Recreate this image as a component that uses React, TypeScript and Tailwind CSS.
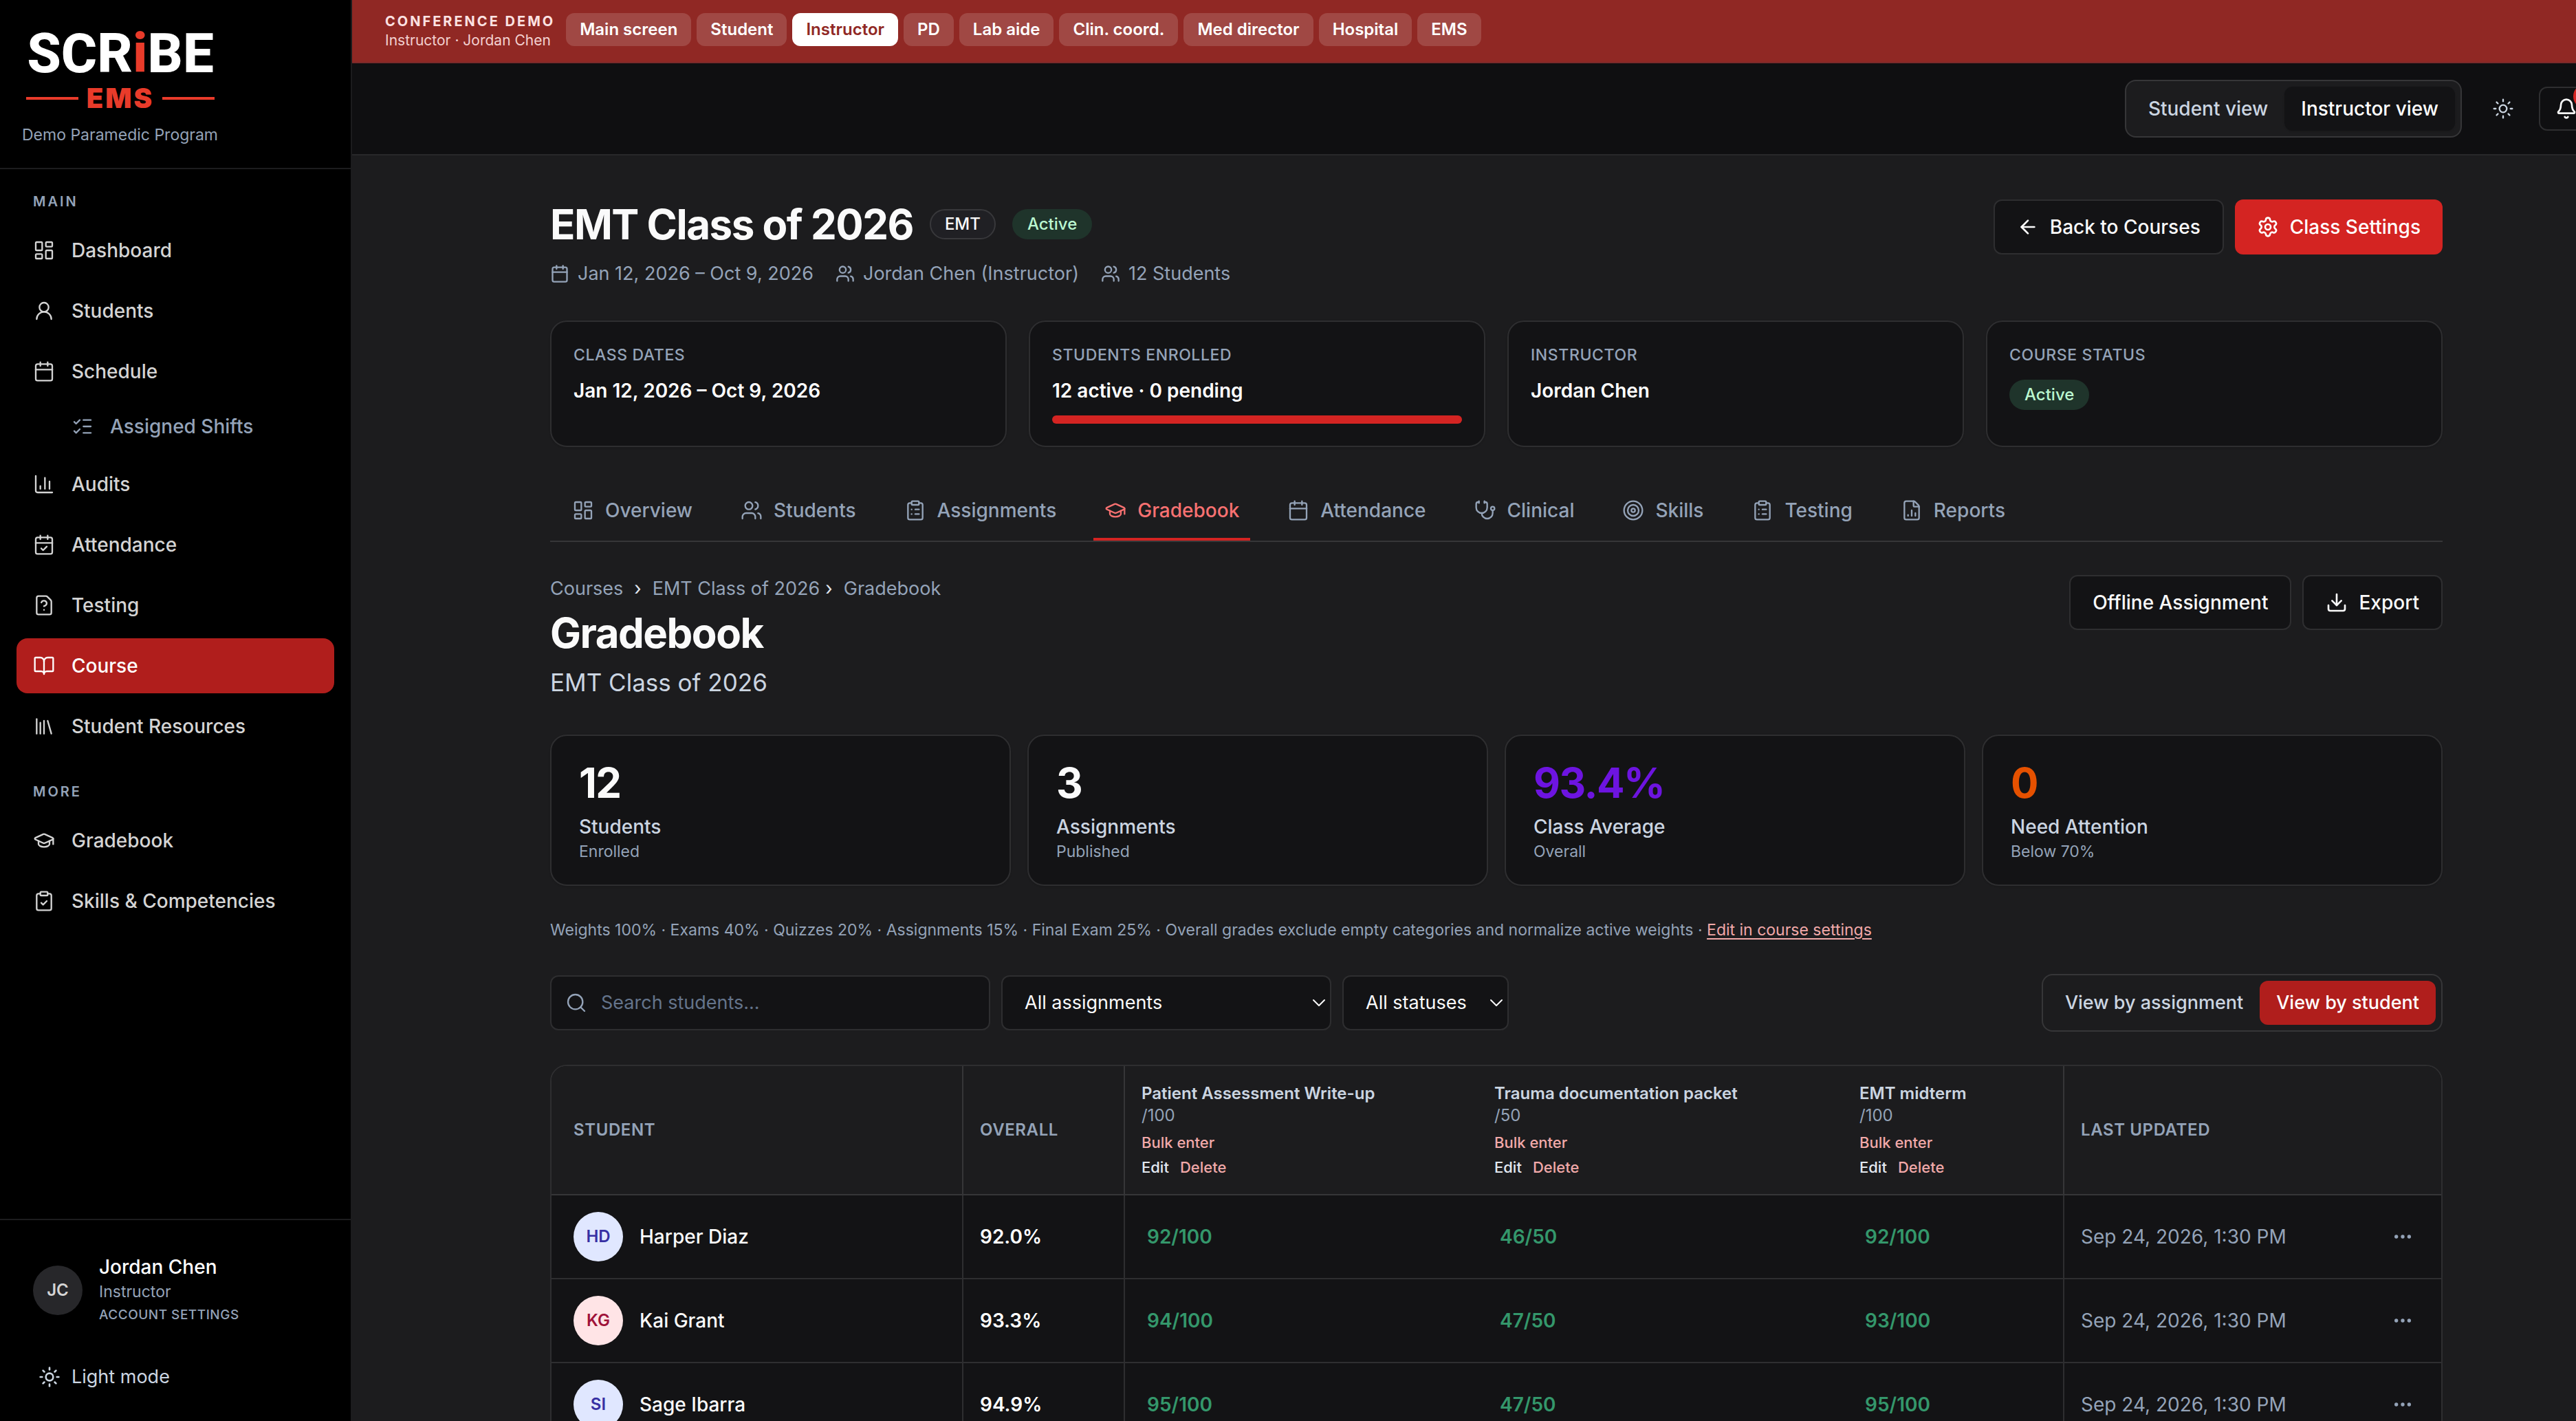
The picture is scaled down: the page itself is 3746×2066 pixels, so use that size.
import React, { useState } from 'react';
import {
  ArrowLeft,
  Bell,
  BookOpen,
  Calendar,
  CalendarCheck,
  ChartColumn,
  ChevronDown,
  ClipboardCheck,
  ClipboardList,
  Download,
  Ellipsis,
  FileChartColumn,
  FileQuestionMark,
  GraduationCap,
  LayoutDashboard,
  Library,
  ListChecks,
  Search,
  Settings,
  Stethoscope,
  Sun,
  Target,
  UserRound,
  Users,
  type LucideIcon,
} from 'lucide-react';
import clsx from 'clsx';

type NavItem = { label: string; icon: LucideIcon; children?: NavItem[] };

const mainNav: NavItem[] = [
  { label: 'Dashboard', icon: LayoutDashboard },
  { label: 'Students', icon: UserRound },
  { label: 'Schedule', icon: Calendar, children: [{ label: 'Assigned Shifts', icon: ListChecks }] },
  { label: 'Audits', icon: ChartColumn },
  { label: 'Attendance', icon: CalendarCheck },
  { label: 'Testing', icon: FileQuestionMark },
  { label: 'Course', icon: BookOpen },
  { label: 'Student Resources', icon: Library },
];

const moreNav: NavItem[] = [
  { label: 'Gradebook', icon: GraduationCap },
  { label: 'Skills & Competencies', icon: ClipboardCheck },
];

const demoRoles = ['Main screen', 'Student', 'Instructor', 'PD', 'Lab aide', 'Clin. coord.', 'Med director', 'Hospital', 'EMS'];

const tabs: NavItem[] = [
  { label: 'Overview', icon: LayoutDashboard },
  { label: 'Students', icon: Users },
  { label: 'Assignments', icon: ClipboardList },
  { label: 'Gradebook', icon: GraduationCap },
  { label: 'Attendance', icon: Calendar },
  { label: 'Clinical', icon: Stethoscope },
  { label: 'Skills', icon: Target },
  { label: 'Testing', icon: ClipboardList },
  { label: 'Reports', icon: FileChartColumn },
];

const stats = [
  { value: '12', label: 'Students', note: 'Enrolled', color: 'text-[#fafafa]' },
  { value: '3', label: 'Assignments', note: 'Published', color: 'text-[#fafafa]' },
  { value: '93.4%', label: 'Class Average', note: 'Overall', color: 'text-[#6d14e0]' },
  { value: '0', label: 'Need Attention', note: 'Below 70%', color: 'text-[#e65100]' },
];

const assignments = [
  { title: 'Patient Assessment Write-up', points: 100 },
  { title: 'Trauma documentation packet', points: 50 },
  { title: 'EMT midterm', points: 100 },
];

const indigo = 'bg-[#e0e7ff] text-[#3730a3]';
const rose = 'bg-[#ffe4e6] text-[#9f1239]';

const students = [
  { name: 'Harper Diaz', initials: 'HD', tone: indigo, overall: '92.0%', scores: [92, 46, 92] },
  { name: 'Kai Grant', initials: 'KG', tone: rose, overall: '93.3%', scores: [94, 47, 93] },
  { name: 'Sage Ibarra', initials: 'SI', tone: indigo, overall: '94.9%', scores: [95, 47, 95] },
];

const outlineButton =
  'flex h-20 items-center gap-4 rounded-xl border-2 border-[#2e2e30] bg-[#131315] px-8 text-[28px] font-medium text-[#fafafa]';

const Logo = () => (
  <div className="w-[274px]">
    <div className="text-center font-[Roboto,sans-serif] text-[80px] leading-[84px] font-extrabold text-white">
      SCR<span className="text-[#e93b2a]">i</span>BE
    </div>
    <div className="flex items-center gap-3 text-[#e93b2a]">
      <span className="h-1 flex-1 bg-[#e93b2a]" />
      <span className="text-[40px] leading-[46px] font-black tracking-[3px]">EMS</span>
      <span className="h-1 flex-1 bg-[#e93b2a]" />
    </div>
  </div>
);

const NavLink = ({ item, active }: { item: NavItem; active?: boolean }) => (
  <a
    href="#"
    className={clsx(
      'flex h-20 items-center gap-6 rounded-2xl px-6 text-[28px] font-medium',
      active ? 'bg-[#b01e1c] text-white' : 'text-[#d4d4d4]'
    )}
  >
    <item.icon className="size-8" strokeWidth={1.75} />
    {item.label}
  </a>
);

const NavSection = ({ title, items }: { title: string; items: NavItem[] }) => (
  <section>
    <h2 className="mb-4 px-6 text-xl leading-[30px] font-semibold tracking-[3px] text-[#94a3b8]">{title}</h2>
    <ul className="flex flex-col gap-2">
      {items.map((item) => (
        <li key={item.label}>
          <NavLink item={item} active={item.label === 'Course'} />
          {item.children?.map((child) => (
            <a
              key={child.label}
              href="#"
              className="mt-1 ml-14 flex h-18 items-center gap-6 px-6 text-[28px] font-medium text-[#94a3b8]"
            >
              <child.icon className="size-8" strokeWidth={1.75} />
              {child.label}
            </a>
          ))}
        </li>
      ))}
    </ul>
  </section>
);

const Sidebar = () => (
  <aside className="flex w-[512px] shrink-0 flex-col border-r-2 border-[#1c1c1e] bg-black">
    <div className="h-[246px] border-b-2 border-[#1c1c1e] px-8 pt-9">
      <div className="pl-1.5">
        <Logo />
      </div>
      <p className="mt-3.5 text-[23px] leading-8 text-[#94a3b8]">Demo Paramedic Program</p>
    </div>
    <nav className="flex flex-1 flex-col gap-10 px-6 pt-8">
      <NavSection title="MAIN" items={mainNav} />
      <NavSection title="MORE" items={moreNav} />
    </nav>
    <div className="h-[294px] border-t-2 border-[#1c1c1e] px-12 pt-12">
      <a href="#" className="flex items-center gap-6">
        <span className="flex size-18 items-center justify-center rounded-full bg-[#27272a] text-2xl font-semibold text-[#d4d4d4]">
          JC
        </span>
        <span className="flex flex-col">
          <span className="text-[28px] leading-10 font-medium text-white">Jordan Chen</span>
          <span className="text-[23px] leading-8 text-[#94a3b8]">Instructor</span>
          <span className="text-[19px] leading-9 font-medium tracking-[0.5px] text-[#94a3b8]">ACCOUNT SETTINGS</span>
        </span>
      </a>
      <button className="mt-13 flex items-center gap-4 px-2 text-[27px] leading-10 text-[#cbd5e1]">
        <Sun className="size-8" />
        Light mode
      </button>
    </div>
  </aside>
);

const DemoBar = () => (
  <div className="flex h-23 items-center gap-4 border-b-2 border-[#7c2a2a] bg-[#902824] px-12 whitespace-nowrap">
    <div>
      <p className="text-xl leading-7 font-bold tracking-[3px] text-[#fde2e2]">CONFERENCE DEMO</p>
      <p className="text-[21px] leading-7 text-[#f3d1d0]">Instructor · Jordan Chen</p>
    </div>
    <div className="flex gap-2 pb-1">
      {demoRoles.map((role) => (
        <button
          key={role}
          className={clsx(
            'h-12 rounded-xl px-5 text-2xl font-semibold',
            role === 'Instructor' ? 'bg-white text-[#902824]' : 'bg-[#a04844] text-white'
          )}
        >
          {role}
        </button>
      ))}
    </div>
  </div>
);

const TopBar = () => (
  <header className="flex h-[134px] items-center justify-end gap-4 border-b-2 border-[#28282a] bg-[#0f0f11] pr-[68px]">
    <div className="mr-2 flex h-21 items-center rounded-2xl border-2 border-[#363638] bg-[#1c1c1e] px-2 text-[28px] font-medium">
      <button className="h-16 px-6 text-[#cbd5e1]">Student view</button>
      <button className="h-16 rounded-xl bg-[#131315] px-6 text-white shadow-sm">Instructor view</button>
    </div>
    <button aria-label="Toggle theme" className="flex size-18 items-center justify-center text-[#cbd5e1]">
      <Sun className="size-8" strokeWidth={1.75} />
    </button>
    <button
      aria-label="Notifications"
      className="relative flex h-16 w-20 items-center justify-center rounded-xl border-2 border-[#2e2e30] text-[#fafafa]"
    >
      <Bell className="size-8" />
      <span className="absolute -top-1.5 -right-2 size-9 rounded-full bg-[#d42422]" />
    </button>
  </header>
);

const ActiveBadge = () => (
  <span className="inline-flex h-11 items-center rounded-full bg-[#1f342b] px-5.5 text-2xl font-medium text-[#bbf7d0]">
    Active
  </span>
);

const ClassHeader = () => (
  <div className="flex items-start justify-between">
    <div>
      <div className="flex h-18 items-center gap-6">
        <h1 className="text-6xl font-bold tracking-tight text-[#fafafa]">EMT Class of 2026</h1>
        <span className="inline-flex h-11 items-center rounded-full border-2 border-[#38383b] bg-[#202024] px-5 text-2xl font-medium text-[#fafafa]">
          EMT
        </span>
        <ActiveBadge />
      </div>
      <div className="mt-4 flex gap-8 text-[27px] leading-10 text-[#94a3b8]">
        <span className="flex items-center gap-3">
          <Calendar className="size-7" />
          Jan 12, 2026 – Oct 9, 2026
        </span>
        <span className="flex items-center gap-3">
          <Users className="size-7" />
          Jordan Chen (Instructor)
        </span>
        <span className="flex items-center gap-3">
          <Users className="size-7" />
          12 Students
        </span>
      </div>
    </div>
    <div className="flex gap-4">
      <button className={outlineButton}>
        <ArrowLeft className="size-8" />
        Back to Courses
      </button>
      <button className="flex h-20 items-center gap-4 rounded-xl bg-[#d42422] px-8 text-[28px] font-medium text-white">
        <Settings className="size-8" />
        Class Settings
      </button>
    </div>
  </div>
);

const InfoCard = ({ label, children }: { label: string; children: React.ReactNode }) => (
  <div className="h-46 rounded-3xl border-2 border-[#2e2e30] bg-[#131315] p-8 shadow-sm">
    <p className="text-[23px] leading-8 font-medium tracking-[0.6px] text-[#94a3b8] uppercase">{label}</p>
    {children}
  </div>
);

const InfoCards = () => (
  <div className="mt-12 grid grid-cols-4 gap-8 text-[28px] leading-10 font-semibold text-white">
    <InfoCard label="Class dates">
      <p className="mt-4">Jan 12, 2026 – Oct 9, 2026</p>
    </InfoCard>
    <InfoCard label="Students enrolled">
      <p className="mt-4">12 active · 0 pending</p>
      <div className="mt-4 h-3 rounded-full bg-[#d42422]" />
    </InfoCard>
    <InfoCard label="Instructor">
      <p className="mt-4">Jordan Chen</p>
    </InfoCard>
    <InfoCard label="Course status">
      <div className="mt-5 flex">
        <ActiveBadge />
      </div>
    </InfoCard>
  </div>
);

const CourseTabs = () => (
  <nav className="mt-12 flex gap-[38px] border-b-2 border-[#363638] px-4">
    {tabs.map((tab) => (
      <a
        key={tab.label}
        href="#"
        className={clsx(
          'flex h-22 items-center gap-4 px-4 text-[28px] font-medium',
          tab.label === 'Gradebook'
            ? 'border-b-4 border-[#d42422] pt-1 text-[#f87171]'
            : 'text-[#94a3b8]'
        )}
      >
        <tab.icon className="size-8" strokeWidth={1.75} />
        {tab.label}
      </a>
    ))}
  </nav>
);

const GradebookHeader = () => (
  <div className="mt-12 flex items-start justify-between">
    <div>
      <nav aria-label="Breadcrumb" className="flex gap-4 text-[27px] leading-10 text-[#94a3b8]">
        <a href="#">Courses</a>
        <span className="text-[#e2e8f0]">›</span>
        <span className="flex gap-2">
          <a href="#">EMT Class of 2026</a>
          <span className="text-[#e2e8f0]">›</span>
        </span>
        <span>Gradebook</span>
      </nav>
      <h2 className="mt-2 text-6xl leading-[72px] font-bold tracking-tight text-[#fafafa]">Gradebook</h2>
      <p className="mt-2 text-[35px] leading-14 text-[#cbd5e1]">EMT Class of 2026</p>
    </div>
    <div className="flex gap-4">
      <button className={outlineButton}>Offline Assignment</button>
      <button className={outlineButton}>
        <Download className="size-8" />
        Export
      </button>
    </div>
  </div>
);

const StatCards = () => (
  <div className="mt-12 grid grid-cols-4 gap-6">
    {stats.map((stat) => (
      <div key={stat.label} className="rounded-3xl border-2 border-[#2e2e30] bg-[#131315] px-10 py-8 shadow-sm">
        <p className={clsx('text-6xl leading-[72px] font-bold tracking-tight', stat.color)}>{stat.value}</p>
        <p className="mt-2 text-[28px] leading-10 font-medium text-[#cbd5e1]">{stat.label}</p>
        <p className="text-[23px] leading-8 text-[#94a3b8]">{stat.note}</p>
      </div>
    ))}
  </div>
);

const FilterSelect = ({ label, options, className }: { label: string; options: string[]; className: string }) => (
  <div className={clsx('relative', className)}>
    <select
      aria-label={label}
      className="h-20 w-full appearance-none rounded-xl border-2 border-[#2e2e30] bg-[#131315] pr-10 pl-8 text-[27px] text-[#fafafa]"
    >
      {options.map((option) => (
        <option key={option}>{option}</option>
      ))}
    </select>
    <ChevronDown className="pointer-events-none absolute top-6 right-0.5 size-8 text-[#fafafa]" strokeWidth={1.5} />
  </div>
);

const Filters = () => {
  const [view, setView] = useState('student');

  const viewButton = (name: string) =>
    clsx('h-16 px-6', view === name ? 'rounded-xl bg-[#b01e1c] text-white' : 'text-[#cbd5e1]');

  return (
    <div className="mt-12 flex items-center gap-4">
      <label className="flex h-20 w-160 items-center gap-5 rounded-xl border-2 border-[#2e2e30] bg-[#131315] px-5">
        <Search className="size-8 shrink-0 text-[#94a3b8]" strokeWidth={1.75} />
        <input
          type="text"
          aria-label="Search students"
          placeholder="Search students..."
          className="w-full bg-transparent text-[27px] text-white outline-none placeholder:text-[#64748b]"
        />
      </label>
      <FilterSelect
        label="Assignment"
        options={['All assignments', ...assignments.map((a) => a.title)]}
        className="w-120"
      />
      <FilterSelect label="Status" options={['All statuses']} className="w-[242px]" />
      <div className="ml-auto flex h-21 items-center rounded-2xl border-2 border-[#363638] px-2 text-[27px] font-medium">
        <button className={viewButton('assignment')} onClick={() => setView('assignment')}>
          View by assignment
        </button>
        <button className={viewButton('student')} onClick={() => setView('student')}>
          View by student
        </button>
      </div>
    </div>
  );
};

const GradeTable = () => (
  <div className="mt-12 overflow-hidden rounded-3xl border-2 border-[#2e2e30] bg-[#131315]">
    <table className="w-full table-fixed border-separate border-spacing-0 text-left text-[28px]">
      <colgroup>
        <col className="w-[599px]" />
        <col className="w-[235px]" />
        <col className="w-[513px]" />
        <col className="w-[531px]" />
        <col className="w-[322px]" />
        <col />
        <col className="w-28" />
      </colgroup>
      <thead className="bg-[#1c1c1e] text-2xl text-[#94a3b8]">
        <tr className="*:border-b-2 *:border-[#363638]">
          <th className="border-r-2 px-8 font-semibold tracking-[0.6px]">STUDENT</th>
          <th className="border-r-2 px-6 font-semibold tracking-[0.6px]">OVERALL</th>
          {assignments.map((assignment, index) => (
            <th key={assignment.title} className={clsx('px-6 py-6 font-normal', index === 2 && 'border-r-2')}>
              <div className="font-semibold text-[#cbd5e1]">{assignment.title}</div>
              <div>/{assignment.points}</div>
              <div className="mt-2 flex flex-col items-start gap-1.5 text-[22px] leading-[30px] font-medium">
                <button className="text-[#f1a9a9]">Bulk enter</button>
                <div className="flex gap-4">
                  <button className="text-[#e2e8f0]">Edit</button>
                  <button className="text-[#f1a9a9]">Delete</button>
                </div>
              </div>
            </th>
          ))}
          <th className="px-6 font-semibold tracking-[0.6px]">LAST UPDATED</th>
          <th aria-label="Actions" />
        </tr>
      </thead>
      <tbody>
        {students.map((student) => (
          <tr key={student.name} className="h-[122px] *:border-b-2 *:border-[#2e2e30]">
            <td className="border-r-2 px-8">
              <div className="flex items-center gap-6 font-medium text-[#fafafa]">
                <span
                  className={clsx(
                    'flex size-18 items-center justify-center rounded-full text-2xl font-semibold',
                    student.tone
                  )}
                >
                  {student.initials}
                </span>
                {student.name}
              </div>
            </td>
            <td className="border-r-2 px-6 font-semibold text-white">{student.overall}</td>
            {student.scores.map((score, index) => (
              <td key={index} className={clsx('px-6 font-semibold text-[#34976b]', index === 2 && 'border-r-2')}>
                <button className="px-2">
                  {score}/{assignments[index].points}
                </button>
              </td>
            ))}
            <td className="px-6 text-[#94a3b8]">Sep 24, 2026, 1:30 PM</td>
            <td className="px-6">
              <button aria-label="Row actions" className="flex size-16 items-center justify-center text-[#94a3b8]">
                <Ellipsis className="size-8" />
              </button>
            </td>
          </tr>
        ))}
      </tbody>
    </table>
  </div>
);

const App = () => {
  return (
    <div className="flex h-screen overflow-hidden bg-[#1c1c1e] font-[Inter,sans-serif]">
      <Sidebar />
      <div className="-mr-[94px] min-w-0 flex-1">
        <DemoBar />
        <TopBar />
        <main className="mx-auto max-w-[2752px] pt-16">
          <ClassHeader />
          <InfoCards />
          <CourseTabs />
          <GradebookHeader />
          <StatCards />
          <p className="mt-12 text-[23px] leading-8 text-[#94a3b8]">
            Weights 100% · Exams 40% · Quizzes 20% · Assignments 15% · Final Exam 25% · Overall grades exclude empty
            categories and normalize active weights ·{' '}
            <a href="#" className="text-[#f1a9a9] underline underline-offset-4">
              Edit in course settings
            </a>
          </p>
          <Filters />
          <GradeTable />
        </main>
      </div>
    </div>
  );
};

export default App;
